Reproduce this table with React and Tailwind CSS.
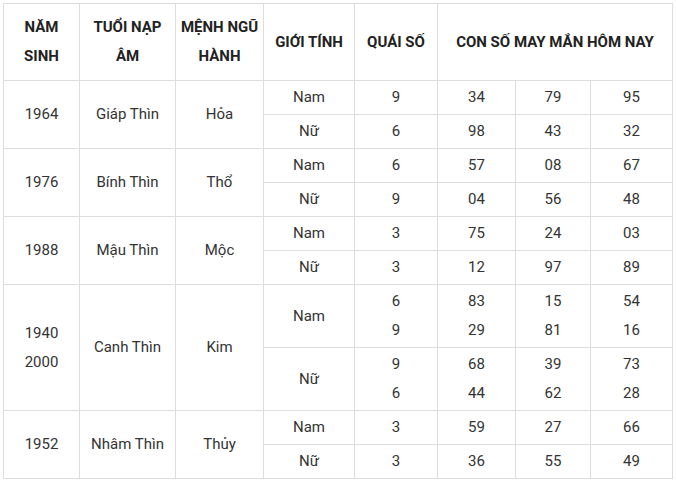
import React from "react";

const rows = [
  { year: ["1964"], tuoi: "Giáp Thìn", menh: "Hỏa", sub: [
    { g: "Nam", q: ["9"], n: [["34"], ["79"], ["95"]] },
    { g: "Nữ", q: ["6"], n: [["98"], ["43"], ["32"]] },
  ]},
  { year: ["1976"], tuoi: "Bính Thìn", menh: "Thổ", sub: [
    { g: "Nam", q: ["6"], n: [["57"], ["08"], ["67"]] },
    { g: "Nữ", q: ["9"], n: [["04"], ["56"], ["48"]] },
  ]},
  { year: ["1988"], tuoi: "Mậu Thìn", menh: "Mộc", sub: [
    { g: "Nam", q: ["3"], n: [["75"], ["24"], ["03"]] },
    { g: "Nữ", q: ["3"], n: [["12"], ["97"], ["89"]] },
  ]},
  { year: ["1940", "2000"], tuoi: "Canh Thìn", menh: "Kim", sub: [
    { g: "Nam", q: ["6", "9"], n: [["83", "29"], ["15", "81"], ["54", "16"]] },
    { g: "Nữ", q: ["9", "6"], n: [["68", "44"], ["39", "62"], ["73", "28"]] },
  ]},
  { year: ["1952"], tuoi: "Nhâm Thìn", menh: "Thủy", sub: [
    { g: "Nam", q: ["3"], n: [["59"], ["27"], ["66"]] },
    { g: "Nữ", q: ["3"], n: [["36"], ["55"], ["49"]] },
  ]},
];

const td = "border border-[#dddddd] text-center align-middle px-1 py-0";
const th = "border border-[#dddddd] text-center align-middle px-1 py-0 font-bold";

function Lines({ items }) {
  return items.map((t, i) => (
    <React.Fragment key={i}>
      {i > 0 && <br />}
      {t}
    </React.Fragment>
  ));
}

export default function App() {
  return (
    <div className="w-[676px] h-[481px] bg-white pt-[3px] pl-[3px]" style={{ fontFamily: "Roboto, 'Noto Sans', sans-serif" }}>
      <table className="border-collapse text-[15px] leading-[29px] text-[#333333] table-fixed w-[669px]">
        <colgroup>
          <col className="w-[76px]" />
          <col className="w-[96px]" />
          <col className="w-[88px]" />
          <col className="w-[91px]" />
          <col className="w-[83px]" />
          <col className="w-[78px]" />
          <col className="w-[75px]" />
          <col className="w-[82px]" />
        </colgroup>
        <thead>
          <tr className="h-[77px] text-[#222222]">
            <th className={th}>NĂM<br />SINH</th>
            <th className={th}>TUỔI NẠP<br />ÂM</th>
            <th className={th}>MỆNH NGŨ<br />HÀNH</th>
            <th className={th}>GIỚI TÍNH</th>
            <th className={th}>QUÁI SỐ</th>
            <th className={th} colSpan={3}>CON SỐ MAY MẮN HÔM NAY</th>
          </tr>
        </thead>
        <tbody>
          {rows.map((r, ri) =>
            r.sub.map((s, si) => {
              const tall = s.q.length > 1;
              return (
                <tr key={ri + "-" + si} className={tall ? "h-[63px]" : "h-[34px]"}>
                  {si === 0 && (
                    <>
                      <td className={td} rowSpan={2}><Lines items={r.year} /></td>
                      <td className={td} rowSpan={2}>{r.tuoi}</td>
                      <td className={td} rowSpan={2}>{r.menh}</td>
                    </>
                  )}
                  <td className={td}>{s.g}</td>
                  <td className={td}><Lines items={s.q} /></td>
                  {s.n.map((n, ni) => (
                    <td key={ni} className={td}><Lines items={n} /></td>
                  ))}
                </tr>
              );
            })
          )}
        </tbody>
      </table>
    </div>
  );
}
